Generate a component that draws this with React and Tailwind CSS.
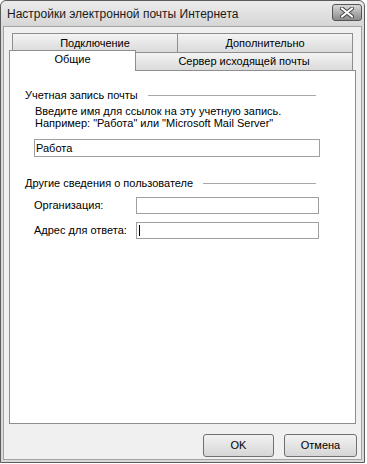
export default function App() {
  const font = { fontFamily: '"Liberation Sans", Arial, sans-serif' };
  return (
    <div className="w-[367px] h-[464px] bg-white" style={font}>
      <div className="w-[365px] h-[463px] border border-[#5c5c5c] rounded-t-[6px] bg-[#d9d9d9] flex flex-col text-[11px] text-black">
        {/* Title bar */}
        <div className="h-[25px] flex items-center justify-between pl-[6px] pr-[2px] rounded-t-[6px] bg-gradient-to-b from-[#ececec] to-[#d6d6d6]">
          <span className="text-[12px] text-[#1a1a1a]">Настройки электронной почты Интернета</span>
          <div className="w-[30px] h-[17px] -mt-[2px] rounded-[3px] border border-[#555] bg-gradient-to-b from-[#d8d8d8] to-[#8a8a8a] flex items-center justify-center">
            <svg width="14" height="11" viewBox="0 0 14 11">
              <path d="M2 1.5 L12 9.5 M12 1.5 L2 9.5" stroke="#444" strokeWidth="4" strokeLinecap="round" />
              <path d="M2 1.5 L12 9.5 M12 1.5 L2 9.5" stroke="#fff" strokeWidth="2.2" strokeLinecap="round" />
            </svg>
          </div>
        </div>

        {/* Body */}
        <div className="flex-1 mx-[2px] mb-[2px] bg-[#f0f0f0] border border-[#a3a3a3] px-[5px] pt-[6px] flex flex-col">
          {/* Tabs row 1 */}
          <div className="flex mx-[3px] h-[19px]">
            <div className="w-[166px] border border-[#8e8e8e] border-b-0 bg-gradient-to-b from-[#f4f4f4] to-[#dadada] flex items-center justify-center">
              Подключение
            </div>
            <div className="flex-1 border border-l-0 border-[#8e8e8e] border-b-0 bg-gradient-to-b from-[#f4f4f4] to-[#dadada] flex items-center justify-center">
              Дополнительно
            </div>
          </div>
          {/* Tabs row 2 */}
          <div className="flex h-[18px] items-end">
            <div className="relative z-10 w-[127px] h-[21px] -mb-[1px] border border-[#8e8e8e] border-b-0 bg-white flex items-center justify-center pb-[3px]">
              Общие
            </div>
            <div className="flex-1 mr-[3px] h-[18px] border border-l-0 border-[#8e8e8e] border-b-0 bg-gradient-to-b from-[#f4f4f4] to-[#dadada] flex items-center justify-center">
              Сервер исходящей почты
            </div>
          </div>

          {/* Panel */}
          <div className="h-[354px] border border-[#8e8e8e] bg-white pl-[15px] pr-[39px] pt-[16px]">
            <div className="flex items-center gap-[10px] h-[16px]">
              <span>Учетная запись почты</span>
              <div className="flex-1 h-px bg-[#a8a8a8]" />
            </div>
            <div className="pl-[10px] mt-[2px] leading-[12px]">
              <div>Введите имя для ссылок на эту учетную запись.</div>
              <div>Например: "Работа" или "Microsoft Mail Server"</div>
            </div>
            <div className="ml-[9px] mr-[-4px] mt-[10px] h-[18px] border border-[#a0a0a0] flex items-center pl-[1px]">
              Работа
            </div>

            <div className="flex items-center gap-[10px] h-[16px] mt-[18px]">
              <span>Другие сведения о пользователе</span>
              <div className="flex-1 h-px bg-[#a8a8a8]" />
            </div>
            <div className="pl-[9px] mt-[6px] flex flex-col gap-[8px]">
              <div className="flex items-center">
                <span className="w-[102px]">Организация:</span>
                <div className="flex-1 mr-[-3px] h-[17px] border border-[#a0a0a0]" />
              </div>
              <div className="flex items-center">
                <span className="w-[102px]">Адрес для ответа:</span>
                <div className="flex-1 mr-[-3px] h-[17px] border border-[#a0a0a0] flex items-center pl-[2px]">
                  <span className="w-px h-[11px] bg-black" />
                </div>
              </div>
            </div>
          </div>

          {/* Buttons */}
          <div className="flex justify-end gap-[10px] mt-[10px] -mr-[1px]">
            <div className="w-[71px] h-[23px] rounded-[3px] border border-[#707070] bg-gradient-to-b from-[#f2f2f2] to-[#d6d6d6] flex items-center justify-center">
              OK
            </div>
            <div className="w-[73px] h-[23px] rounded-[3px] border border-[#707070] bg-gradient-to-b from-[#f2f2f2] to-[#d6d6d6] flex items-center justify-center">
              Отмена
            </div>
          </div>
        </div>
      </div>
    </div>
  );
}
